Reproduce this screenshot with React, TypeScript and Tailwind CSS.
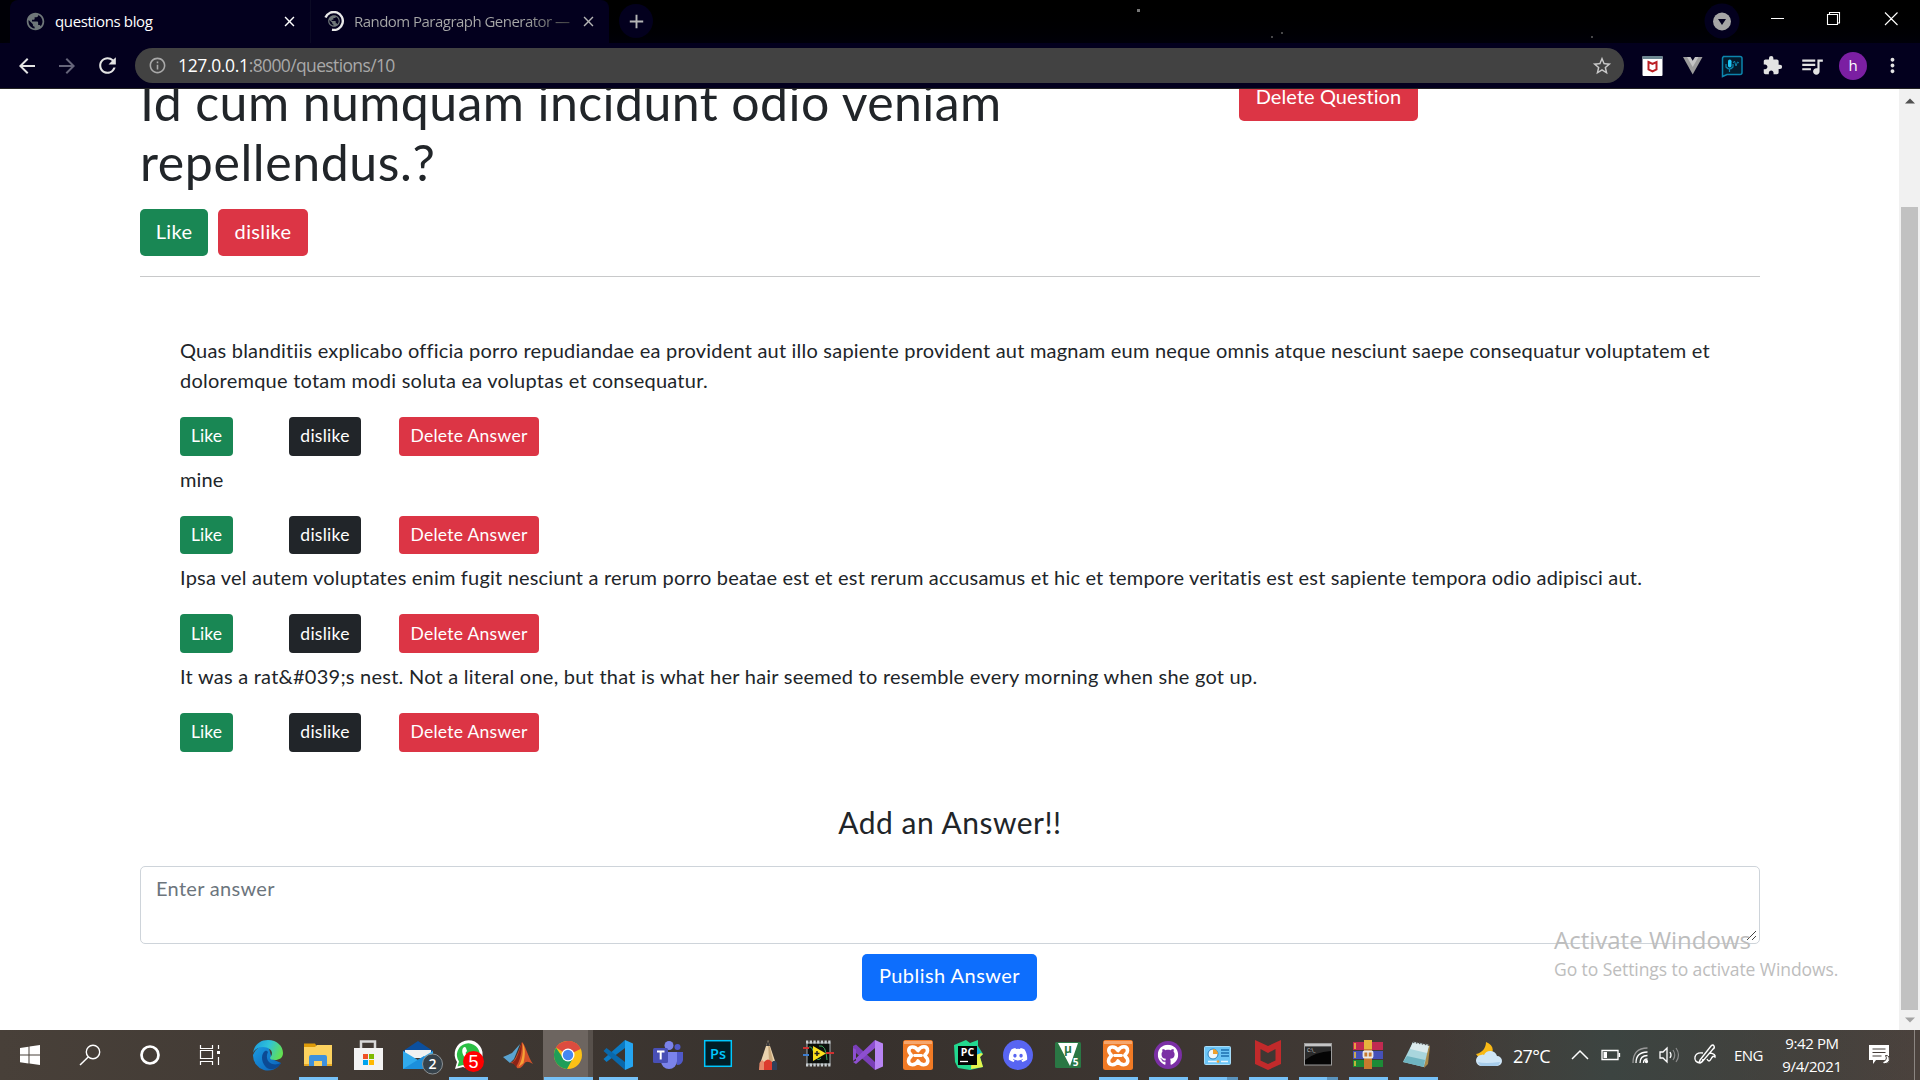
import React from "react";
import { FaDiscord, FaGithub } from "react-icons/fa";
import {
  MdArrowBack,
  MdArrowForward,
  MdRefresh,
  MdInfoOutline,
  MdStarBorder,
  MdExtension,
  MdQueueMusic,
  MdMoreVert,
  MdClose,
  MdAdd,
  MdPublic,
} from "react-icons/md";

/* ---------- browser chrome ---------- */

function TabStrip() {
  return (
    <div className="flex h-[43px] bg-linear-to-b from-black to-[#000009]">
      <div className="flex w-[10px] items-end">
        <div className="h-full w-full rounded-br-lg bg-[#000006]" />
      </div>
      <div className="flex w-[300px] items-center rounded-tl-lg bg-[#03001e] pr-3 pb-px pl-[15px] text-[15px] text-white">
        <MdPublic className="size-[21px] text-[#6f7779]" />
        <span className="ml-[9px] flex-1 tracking-[-0.35px] whitespace-nowrap">questions blog</span>
        <MdClose className="size-[17px]" />
      </div>
      <div className="flex w-[299px] items-center rounded-tr-lg border-l border-[#0b0a24] bg-[#03001e] pr-[12px] pb-px pl-[13px] text-[15px]">
        <span className="relative flex size-5 items-center justify-center">
          <svg viewBox="0 0 20 20" className="absolute inset-0 size-5">
            <path d="M1.5 6.5A9 9 0 1 1 8 18.8" fill="none" stroke="#e8e8e8" strokeWidth="2.4" />
          </svg>
          <MdPublic className="size-[14px] text-[#6f7779]" />
        </span>
        <span className="ml-[10px] flex-1 bg-linear-to-r from-[#a8a8a8] from-75% to-[#333] bg-clip-text tracking-[-0.53px] whitespace-nowrap text-transparent">
          Random Paragraph Generator —
        </span>
        <MdClose className="size-[17px] text-[#b5b5b5]" />
      </div>
      <div className="mt-[4px] ml-[10px] flex size-[34px] items-center justify-center rounded-full bg-[#03001e]">
        <MdAdd className="size-[23px] text-[#b5b5b5]" />
      </div>
      <svg className="ml-auto h-[43px] w-[1052px]" viewBox="868 0 1052 43">
        <g fill="#777">
          <rect x="1137" y="9" width="3" height="3" />
          <rect x="1271" y="36" width="2" height="2" opacity=".6" />
          <rect x="1281" y="32" width="2" height="2" opacity=".6" />
          <rect x="1591" y="36" width="2" height="2" opacity=".6" />
        </g>
        <circle cx="1722" cy="21" r="17.5" fill="#03001e" />
        <circle cx="1722" cy="21.5" r="9" fill="#a5a5a5" />
        <path d="M1718 19h8l-4 6z" fill="#03001e" />
        <path d="M1771 18.5h13M1827.500 14.500h10v10h-10zM1829.500 14v-1.500h10v10.500h-1.500M1885 12.500l12.500 12.500M1897.500 12.500l-12.500 12.500" fill="none" stroke="#fff" strokeWidth="1.100" />
      </svg>
    </div>
  );
}

function Toolbar() {
  return (
    <div className="flex h-[46px] items-center border-b border-[#242424] bg-[#03001e] text-[#e3e3e3]">
      <MdArrowBack className="ml-[15px] size-[24px]" />
      <MdArrowForward className="ml-[16px] size-[24px] text-[#66657a]" />
      <MdRefresh className="ml-[16px] size-[25px]" />
      <div className="ml-[15px] flex h-[35px] w-[1489px] items-center rounded-full bg-[#424242] pr-[11px] pl-[13px] text-[17.5px] text-[#a9a9a9]">
        <MdInfoOutline className="size-[19px]" />
        <span className="ml-[11px] flex-1 tracking-[-0.63px]">
          <span className="tracking-[-0.35px] text-white">127.0.0.1</span>:8000/questions/10
        </span>
        <MdStarBorder className="size-[22px] text-[#c9c9c9]" />
      </div>
      <svg className="ml-[17px] h-[30px] w-[110px]" viewBox="0 0 110 30">
        <rect x="1.500" y="5" width="20" height="20" rx="1" fill="#fff" />
        <rect x="1.500" y="5" width="20" height="3" fill="#6d8792" />
        <path d="M7.500 11l4 2 4-2v7.500l-4 2-4-2z" fill="none" stroke="#bb1f24" strokeWidth="2" />
        <path d="M42 6h19.500L51.700 23.500z" fill="#9b9b9b" />
        <path d="M46 6h4l1.700 3.500L53.500 6h4l-5.800 10z" fill="#c4c4c4" />
        <path d="M49.500 6h4.500l-2.300 3.800z" fill="#03001e" />
        <path d="M82 5.500h17q2 0 2 2v14q0 2-2 2H86l-4.500 2V7.500q0-2 2-2z" fill="#031a2c" stroke="#0c85ad" strokeWidth="1.500" />
        <path d="M85 13v3q3.500 4 7 0v-3M88.500 18v3" fill="none" stroke="#0c85ad" strokeWidth="1.200" />
        <rect x="87" y="8.500" width="3.500" height="8" rx="1.700" fill="#1fc6f5" />
        <path d="M92 12l1.500-2 1.500 5 1.500-4 1.500 1" fill="none" stroke="#0c85ad" />
      </svg>
      <MdExtension className="ml-[11px] size-[21px]" />
      <MdQueueMusic className="ml-[16px] size-[26px]" />
      <div className="ml-[14px] flex size-[28px] items-center justify-center rounded-full bg-[#7b1fa2] text-[15px] text-white">h</div>
      <MdMoreVert className="ml-[14px] size-[23px]" />
    </div>
  );
}

/* ---------- page ---------- */

type Line = { text: string; cls: string };
const answers: { lines: Line[] }[] = [
  {
    lines: [
      { text: "Quas blanditiis explicabo officia porro repudiandae ea provident aut illo sapiente provident aut magnam eum neque omnis atque nesciunt saepe consequatur voluptatem et", cls: "tracking-[0.21px]" },
      { text: "doloremque totam modi soluta ea voluptas et consequatur.", cls: "tracking-[0.24px]" },
    ],
  },
  { lines: [{ text: "mine", cls: "tracking-[0.1px]" }] },
  { lines: [{ text: "Ipsa vel autem voluptates enim fugit nesciunt a rerum porro beatae est et est rerum accusamus et hic et tempore veritatis est est sapiente tempora odio adipisci aut.", cls: "tracking-[0.187px]" }] },
  { lines: [{ text: "It was a rat&#039;s nest. Not a literal one, but that is what her hair seemed to resemble every morning when she got up.", cls: "tracking-[0.24px]" }] },
];

const smallButton = "flex h-[38.75px] items-center justify-center rounded-[4px] text-[17.5px] text-white whitespace-nowrap";
const button = "flex h-[47px] items-center justify-center rounded-[5px] pb-[4px] text-[20px] text-white whitespace-nowrap";

function Answer({ lines }: { lines: Line[] }) {
  return (
    <div>
      <div className="pb-[22px] text-[20px] leading-[30px]">
        {lines.map((l) => (
          <p key={l.text} className={"whitespace-nowrap " + l.cls}>
            {l.text}
          </p>
        ))}
      </div>
      <div className="mb-[8px] flex">
        <button className={smallButton + " w-[53px] bg-[#198754]"}>Like</button>
        <button className={smallButton + " ml-[56px] w-[72px] bg-[#212529] tracking-[0.25px]"}>dislike</button>
        <button className={smallButton + " ml-[38px] w-[140px] bg-[#dc3545] tracking-[0.28px]"}>Delete Answer</button>
      </div>
    </div>
  );
}

function Page() {
  return (
    <div className="relative flex h-[941px] overflow-hidden bg-white font-['Lato',sans-serif] text-[#212529]">
      <main className="h-full w-[1899px] px-[140px]">
        <div className="-mt-[17px] flex h-[120px]">
          <h1 className="w-[1099px] text-[50px] leading-[60px] tracking-[0.42px] whitespace-nowrap">
            Id cum numquam incidunt odio veniam
            <br />
            <span className="tracking-[0.6px]">repellendus.?</span>
          </h1>
          <button className={button + " mt-[2px] w-[179px] bg-[#dc3545] tracking-[0.08px]"}>Delete Question</button>
        </div>
        <div className="mt-[17px] flex gap-[10px]">
          <button className={button + " w-[68px] bg-[#198754] tracking-[0.35px]"}>Like</button>
          <button className={button + " w-[90px] bg-[#dc3545] tracking-[0.35px]"}>dislike</button>
        </div>
        <div className="mt-[20px] h-px w-[1620px] bg-[#c8c9ca]" />
        <section className="mt-[57.75px] pl-[40px]">
          {answers.map((a) => (
            <Answer key={a.lines[0].text} lines={a.lines} />
          ))}
        </section>
        <h2 className="mt-[52px] w-[1620px] text-center text-[30px] leading-[36px] tracking-[0.5px]">Add an Answer!!</h2>
        <div className="relative mt-[26px] h-[78px] w-[1620px] rounded-[5px] border border-[#ced4da] px-[15px] pt-[6px] text-[20px] leading-[30px] tracking-[0.3px] text-[#6c757d]">
          Enter answer
          <svg className="absolute right-[2px] bottom-[2px] size-[11px]" viewBox="0 0 11 11">
            <path d="M1 10L10 1M6 10l4-4" stroke="#444" fill="none" />
          </svg>
        </div>
        <div className="mt-[10px] flex w-[1619px] justify-center">
          <button className={button + " w-[175px] bg-[#0d6efd] tracking-[0.46px]"}>Publish Answer</button>
        </div>
      </main>
      <div className="flex h-full w-[21px] flex-col items-center bg-[#f1f1f1]">
        <svg className="mt-[9px] h-[6px] w-[10px]" viewBox="0 0 10 6">
          <path d="M0 5.500L5 .5l5 5z" fill="#505050" />
        </svg>
        <div className="mt-[103px] h-[803px] w-[17px] bg-[#c1c1c1]" />
        <svg className="mt-[7px] h-[6px] w-[10px]" viewBox="0 0 10 6">
          <path d="M0 .5l5 5 5-5z" fill="#a3a3a3" />
        </svg>
      </div>
      <div className="absolute top-[834px] left-[1554px] font-['Open_Sans',sans-serif] whitespace-nowrap text-[#bdbdbd]">
        <div className="text-[24px] leading-[34px]">Activate Windows</div>
        <div className="text-[17.5px] leading-[24px] tracking-[-0.07px]">Go to Settings to activate Windows.</div>
      </div>
    </div>
  );
}

/* ---------- taskbar icons, each drawn on a 32x32 grid ---------- */

function Icon({ children }: { children: React.ReactNode }) {
  return (
    <svg viewBox="0 0 32 32" className="size-[32px] overflow-visible">
      {children}
    </svg>
  );
}

const Edge = () => (
  <Icon>
    <defs>
      <linearGradient id="edgeTop" x1="0" x2="1" y1=".2" y2=".5">
        <stop offset="0" stopColor="#1a9be0" />
        <stop offset=".5" stopColor="#30c3d8" />
        <stop offset="1" stopColor="#63e052" />
      </linearGradient>
      <linearGradient id="edgeLow" x1="0" x2="1" y1="0" y2="1">
        <stop offset="0" stopColor="#1b9de2" />
        <stop offset="1" stopColor="#0b5fb8" />
      </linearGradient>
    </defs>
    <path d="M1 16A15 15 0 0 1 16 6l4 14 9 4A15 15 0 0 1 1 16z" fill="url(#edgeLow)" />
    <path d="M1 14C2 6 8 1 16 1c9 0 15 6 15 13 0 5-4 7-8 7-3 0-5-1-5-2s2-2 2-5c0-3-4-6-9-6C6 8 2 11 1 14z" fill="url(#edgeTop)" />
    <path d="M13 12c-4 3-4 10 0 15 3 4 8 4 12 1.500 2-1.200 3-3 4-4.500-6 3-13 1-14-5-.3-2 0-4 1-6-1-1.500-2-1.500-3-1z" fill="#0c4a94" />
  </Icon>
);
const Explorer = () => (
  <Icon>
    <path d="M2 4.500h11l2 3h14V14H2z" fill="#dd9a08" />
    <path d="M2 8h11l2-2h15v21H2z" fill="#fcd25f" />
    <path d="M7 27V18q0-2 2-2h14q2 0 2 2v9h-5v-5h-8v5z" fill="#3e91dd" />
    <path d="M2 25h5v2H2zM25 25h5v2h-5z" fill="#e6a823" />
  </Icon>
);
const Store = () => (
  <Icon>
    <path d="M9 10V2.500h14V10" fill="none" stroke="#d9d9d9" strokeWidth="2.500" />
    <path d="M2 9h29v22H2z" fill="#f3f3f3" />
    <path d="M11 15h5v5h-5z" fill="#f05125" />
    <path d="M17 15h5v5h-5z" fill="#7fba00" />
    <path d="M11 21h5v5h-5z" fill="#00a4ef" />
    <path d="M17 21h5v5h-5z" fill="#ffb900" />
  </Icon>
);
const Mail = () => (
  <Icon>
    <path d="M1 12L16 2l15 10v4H1z" fill="#0b4f9e" />
    <path d="M3 11h26v8H3z" fill="#f1f1f1" />
    <path d="M1 12l15 9 15-9v18H1z" fill="#31aaec" />
    <path d="M1 30L22 17l9 13z" fill="#1c8fdb" />
    <circle cx="30.500" cy="25" r="10" fill="#36424b" stroke="#8c9296" />
    <text x="30.500" y="30" textAnchor="middle" fontSize="14" fontWeight="600" fill="#fff">2</text>
  </Icon>
);
const WhatsApp = () => (
  <Icon>
    <path d="M3 30l2-7A14 14 0 1 1 11 28z" fill="#fff" />
    <path d="M5.500 27.500l1.500-5A11.500 11.500 0 1 1 11 26z" fill="#2bbf45" />
    <path d="M11 9q2-2 3 0l1 3-1.500 2q1.500 3 4.500 4.500l2-2 4 2q0 3-3 4-5 0-9-5-3-5-1-8.500z" fill="#fff" />
    <circle cx="21.500" cy="22.500" r="10.500" fill="#f00" />
    <text x="21.500" y="28.500" textAnchor="middle" fontSize="18" fontFamily="Liberation Sans" fill="#fff">5</text>
  </Icon>
);
const Matlab = () => (
  <Icon>
    <path d="M1 18l9-4 8-9-6 15-4 4z" fill="#5aa3d0" />
    <path d="M8 24c5-1 7-8 12-21 3 2 6 15 11 22-5-3-7-3-9 0-2 3-4 5-7 4-1-4-4-5-7-5z" fill="#d4512a" />
    <path d="M20 3c0 10-2 19-6 25-1-2-2-3-4-4 6-4 7-13 10-21z" fill="#8b2317" />
    <path d="M20.500 4c3 5 3 11 1 20l-5 4c4-7 5-15 4-24z" fill="#f6a336" />
  </Icon>
);
const Chrome = () => (
  <Icon>
    <circle cx="16" cy="16" r="14" fill="#fbc116" />
    <path d="M16 16L4 8.500A14 14 0 0 1 28.500 10z" fill="#dd4c3f" />
    <path d="M16 2a14 14 0 0 1 12.500 8H16z" fill="#dd4c3f" />
    <path d="M4 8.700A14 14 0 0 0 15 30l6-11-10 0z" fill="#1f9e58" />
    <circle cx="16" cy="16" r="6.500" fill="#fff" />
    <circle cx="16" cy="16" r="5.200" fill="#4587f0" />
  </Icon>
);
const VSCode = () => (
  <Icon>
    <path d="M23 1L1.500 20l3 3L23 9z" fill="#0a7ac4" />
    <path d="M23 31L1.500 12l3-3L23 23z" fill="#0968ab" />
    <path d="M23 1l8 3.500v23L23 31z" fill="#25a5f1" />
  </Icon>
);
const Teams = () => (
  <Icon>
    <circle cx="25.500" cy="8" r="3" fill="#5059c9" />
    <path d="M22 13h9v8q-1 5-6 5z" fill="#5059c9" />
    <circle cx="17" cy="6.500" r="4.500" fill="#7b83eb" />
    <path d="M9 13h16v9a8 8 0 0 1-16 0z" fill="#7b83eb" />
    <rect x="1" y="9" width="15" height="15" rx="1.500" fill="#484fb5" />
    <path d="M5 12.500h7.500M8.700 12.500v8" stroke="#fff" strokeWidth="2" />
  </Icon>
);
const Photoshop = () => (
  <Icon>
    <rect x="2.700" y="1.700" width="26.600" height="25.600" fill="#001d26" stroke="#00c8ff" strokeWidth="1.500" />
    <text x="16" y="20" textAnchor="middle" fontSize="14.500" fontWeight="600" fill="#00c8ff">Ps</text>
  </Icon>
);
const Pencil = () => (
  <Icon>
    <path d="M16 1l8 24H8z" fill="#ead3ae" />
    <path d="M16 1l5 20-1 2h-3z" fill="#c9a97c" />
    <path d="M16 1l2 6h-4z" fill="#3c3a3c" />
    <path d="M7.500 24q3-5 4.500-1v8H7z" fill="#e8896a" />
    <path d="M12 23q4-5 8 0v8h-8z" fill="#dd3a2d" />
    <path d="M20 23q3-3 5 1v7h-5z" fill="#30405a" />
  </Icon>
);
const LabView = () => (
  <Icon>
    <rect x="5" y="4" width="23" height="21" fill="#0c0f0c" stroke="#a9b0b4" strokeWidth="1" />
    <path d="M4 3h25M4 26h25" stroke="#c9cfd2" strokeWidth="3" strokeDasharray="2.300 1.400" />
    <path d="M5 10q4-6 7 4t7 5M17 7q7-2 8 14" fill="none" stroke="#3aa55c" />
    <path d="M1 9h6M24 14h8" stroke="#d03030" strokeWidth="2" />
    <path d="M1 16h6" stroke="#3c7dd0" strokeWidth="2" />
    <path d="M11 7l13 7.500-13 7.500z" fill="#fbdf1c" />
    <path d="M12.500 14.500h5M15 12v5" stroke="#222" strokeWidth="1.500" />
  </Icon>
);
const VisualStudio = () => (
  <Icon>
    <path d="M1 7l3-1.500L23 23v8L4 14v6l-3 1z" fill="#7a3fb8" />
    <path d="M1 22V9l3 1.500v11L1 23l3 2L23 9V1L1 22z" fill="#8d4fd0" />
    <path d="M23 1l8 3.500v23L23 31z" fill="#b884f3" />
  </Icon>
);
const Xampp = () => (
  <Icon>
    <rect x="1" y="1" width="30" height="30" rx="2.500" fill="#f07a25" />
    <path d="M2 2h28v3H2z" fill="#f6a66c" />
    <path d="M16 11.500C13 6.500 6.500 7 6.800 12c.2 2.500 2.200 3 2.700 4.500-.5 1.500-3 2-3 5.500.3 5 7 5 9.500 0 2.500 5 9.500 5 9.800 0 0-3.500-2.500-4-3-5.500.5-1.500 2.700-2 2.700-5C25.500 6.500 19 6.500 16 11.500z" fill="none" stroke="#fff" strokeWidth="3.600" strokeLinejoin="round" />
    <path d="M12.500 16.500h7" stroke="#fff" strokeWidth="2.800" strokeLinecap="round" />
  </Icon>
);
const PyCharm = () => (
  <Icon>
    <path d="M2 6l12-5 4 3 8-3v6l5 8-3 3 3 10-13 3-12-2-3-6z" fill="#22d88f" />
    <path d="M20 10l11 5-3 3 3 10-12 2z" fill="#e6f34c" />
    <path d="M24 6l5 8-5 2z" fill="#14aee0" />
    <rect x="6" y="7" width="19" height="19" fill="#050505" />
    <text x="15.500" y="17" textAnchor="middle" fontSize="10.500" fontWeight="700" fill="#fff">PC</text>
    <path d="M8 22.500h8" stroke="#fff" strokeWidth="1.300" />
  </Icon>
);
const Discord = () => (
  <Icon>
    <circle cx="16" cy="16" r="15" fill="#5865f2" />
    <FaDiscord x="6" y="6" size={20} color="#fff" />
  </Icon>
);
const Uvision = () => (
  <Icon>
    <rect x="3" y="3" width="26" height="26" rx="1.500" fill="#2a7744" />
    <path d="M6 4h20l-8 23z" fill="#fff" />
    <text x="16" y="14" textAnchor="middle" fontSize="12" fontWeight="700" fill="#2a7744">µ</text>
    <text x="23.500" y="27" textAnchor="middle" fontSize="10" fontWeight="700" fill="#fff">5</text>
  </Icon>
);
const Github = () => (
  <Icon>
    <circle cx="16" cy="16" r="14" fill="#7b2fa5" />
    <FaGithub x="5.500" y="5.500" size={21} color="#fff" />
  </Icon>
);
const ControlPanel = () => (
  <Icon>
    <rect x="2.500" y="7.500" width="26" height="18" rx="1" fill="#6cc5f6" stroke="#a7dcf8" />
    <circle cx="11" cy="15" r="5" fill="#f1f6f9" stroke="#2d81bd" />
    <path d="M11 15V10a5 5 0 0 1 5 5z" fill="#f0a02e" />
    <path d="M19 11h8M19 14h8M19 17h8" stroke="#1c6fb0" strokeWidth="1.600" />
    <path d="M6 22.500h10M19 22.500h7" stroke="#eaf6fd" strokeWidth="1.500" />
    <circle cx="16" cy="22.500" r="1.300" fill="#f0a02e" />
  </Icon>
);
const McAfee = () => (
  <Icon>
    <path d="M3 1l13 6 13-6v24l-13 6-13-6zM8.500 10v11.500l7.500 3.500 7.500-3.500V10L16 14z" fillRule="evenodd" fill="#c22a2b" />
  </Icon>
);
const Terminal = () => (
  <Icon>
    <rect x="2.500" y="4.500" width="27" height="21.500" fill="#050505" stroke="#9b9b9b" />
    <path d="M3 5h26v2.500H3z" fill="#c5c5c5" />
    <path d="M3 8h26v4q-16 1-26 9z" fill="#2a2a2a" />
    <text x="5" y="13" fontSize="5" fill="#ddd">C:\_</text>
  </Icon>
);
const WinRar = () => (
  <Icon>
    <rect x="1" y="3" width="30" height="8" fill="#c02a51" />
    <rect x="1" y="12" width="30" height="8" fill="#4651b8" />
    <rect x="1" y="21" width="30" height="7" fill="#1d8b37" />
    <path d="M3 4v6M3 13v6M3 22v5" stroke="#f1c63b" strokeWidth="1.500" />
    <rect x="12" y="1" width="8" height="29" fill="#c87a2d" />
    <path d="M12 1h8v9h-8z" fill="#e5b43c" />
    <rect x="11.500" y="12.500" width="9" height="6" rx="1" fill="none" stroke="#e8e8e8" strokeWidth="1.800" />
    <path d="M16 13v6" stroke="#e8e8e8" strokeWidth="1.500" />
  </Icon>
);
const Notepad = () => (
  <Icon>
    <path d="M25 5l3 2-2 18-4 4z" fill="#a98a4a" />
    <path d="M11 3l16 3-5 22L1 23z" fill="#a9d6dd" />
    <path d="M11 3l16 3-2 8-17-4z" fill="#dcebed" />
    <path d="M5 17l18 4-1.500 7L1 23z" fill="#6fb4c0" />
    <path d="M11 3l16 3" stroke="#555" strokeWidth="1.800" strokeDasharray="1.500 1.500" />
  </Icon>
);

type TaskApp = { key: string; icon: () => React.ReactElement; state?: "running" | "active" | "multi" };
const apps: TaskApp[] = [
  { key: "edge", icon: Edge },
  { key: "explorer", icon: Explorer, state: "running" },
  { key: "store", icon: Store },
  { key: "mail", icon: Mail },
  { key: "whatsapp", icon: WhatsApp, state: "running" },
  { key: "matlab", icon: Matlab },
  { key: "chrome", icon: Chrome, state: "active" },
  { key: "vscode", icon: VSCode, state: "running" },
  { key: "teams", icon: Teams },
  { key: "photoshop", icon: Photoshop },
  { key: "pencil", icon: Pencil },
  { key: "labview", icon: LabView },
  { key: "vs", icon: VisualStudio },
  { key: "xampp", icon: Xampp },
  { key: "pycharm", icon: PyCharm },
  { key: "discord", icon: Discord },
  { key: "uvision", icon: Uvision },
  { key: "xampp-panel", icon: Xampp, state: "running" },
  { key: "github", icon: Github, state: "running" },
  { key: "control", icon: ControlPanel, state: "multi" },
  { key: "mcafee", icon: McAfee, state: "running" },
  { key: "terminal", icon: Terminal, state: "multi" },
  { key: "winrar", icon: WinRar, state: "running" },
  { key: "notepad", icon: Notepad, state: "running" },
];

function TaskItem({ icon: Glyph, state }: Omit<TaskApp, "key">) {
  const active = state === "active";
  return (
    <div className={"flex h-[50px] w-[50px] flex-col items-center " + (active ? "bg-linear-to-r from-[#6d6560] from-90% to-[#57504b] to-90%" : "")}>
      <div className="mt-[9px] h-[38px]">
        <Glyph />
      </div>
      {state && (
        <div className={"flex h-[3px] bg-[#76c1f7] " + (active ? "w-[49px]" : "w-[39px]")}>
          {state === "multi" && <div className="ml-auto h-full w-[11px] bg-[#5a93bd]" />}
        </div>
      )}
    </div>
  );
}

function Taskbar() {
  return (
    <div className="flex h-[50px] items-center bg-linear-to-r from-[#484039] via-[#37312d] via-45% to-[#4b423d] font-['Open_Sans',sans-serif] text-white">
      <svg className="h-[50px] w-[243px]" viewBox="0 0 243 50">
        <path d="M20 18l8.500-1.200V24.500H20zM29.500 16.600L40 15v9.500H29.500zM20 25.500h8.500v8L20 32.300zM29.500 25.500H40V35l-10.500-1.500z" fill="#fff" />
        <g fill="none" stroke="#fff">
          <circle cx="93" cy="22" r="6.700" strokeWidth="1.400" />
          <path d="M88.500 26.800L80 35" strokeWidth="1.500" />
          <circle cx="150" cy="25" r="8.500" strokeWidth="2.700" />
          <path d="M200.500 15v3.500h12V15M200.500 35v-3.500h12V35M200.500 20.500h12v8h-12zM218.500 15v4M218.500 27v8" strokeWidth="1.200" />
        </g>
        <rect x="217" y="21" width="3" height="3" fill="#fff" />
      </svg>
      {apps.map((a) => (
        <TaskItem key={a.key} icon={a.icon} state={a.state} />
      ))}
      <div className="flex h-full flex-1 items-center bg-linear-to-r from-transparent via-[#3c4441] via-35% to-transparent">
        <svg className="ml-[30px] h-[34px] w-[32px]" viewBox="0 0 32 34">
          <path d="M13 4c0 6-4 11-10 12 2 4 8 6 13 3s6-12-3-15z" fill="#f9b915" />
          <path d="M9 28a5.500 5.500 0 0 1-1-11q2-1 3 0a7 7 0 0 1 13 1 5 5 0 0 1 0 10z" fill="#cfe6f7" />
          <path d="M8 28a5 5 0 0 1-3-4q6 2 22 0a5 5 0 0 1-4 4z" fill="#a8cdeb" />
        </svg>
        <span className="ml-[8px] w-[53px] pt-[2px] text-[18px] tracking-[-0.7px]">27°C</span>
        <svg className="h-[30px] w-[156px]" viewBox="0 0 156 30" fill="none" stroke="#fff">
          <path d="M6 19l8-8 8 8" strokeWidth="1.500" />
          <path d="M36 10.500h16v9H36zM53.500 13v4" strokeWidth="1.300" />
          <rect x="37.500" y="12" width="3.500" height="6" fill="#fff" stroke="none" />
          <g strokeWidth="1.300">
            <path d="M67 23Q67 8 81.500 8" stroke="#999" />
            <path d="M70 23q0-11 11.500-11M74 23q0-7.500 7.500-7.500M77.500 23q0-4 4-4" />
            <circle cx="80.500" cy="21.500" r="1" fill="#fff" />
          </g>
          <path d="M94 12h3l4-4v14l-4-4h-3zM104 12q2 3 0 6" strokeWidth="1.300" />
          <path d="M107 10q3.500 5 0 10M110 8q5 7 0 14" stroke="#8b8b8b" strokeWidth="1.200" />
          <path d="M134 20l11-14q2-2 3 0t-1 3l-11 13-3 1zM137 13q-7-1-8 4t5 6q3-1 3-4M141 19q2 4 4 0t4-2q1-3-5-4" strokeWidth="1.400" />
        </svg>
        <span className="w-[52px] pt-px pl-[12px] text-[15px] tracking-[-0.600px]">ENG</span>
        <div className="w-[76px] text-center text-[15px] leading-[23px] tracking-[-0.400px] whitespace-nowrap">
          <div>9:42 PM</div>
          <div>9/4/2021</div>
        </div>
        <svg className="ml-[18px] h-[22px] w-[22px]" viewBox="0 0 22 22">
          <path d="M1 1h20v15H8l-3 4v-4H1z" fill="#fff" />
          <path d="M4.500 5h13M4.500 8.500h13M4.500 12h9" stroke="#453e3a" strokeWidth="1.200" />
          <path d="M17.500 11.500q3 5-4 6.500 3 3 6 1t1.500-6q-1.500-2-3.500-1.500z" fill="#fff" stroke="#453e3a" />
        </svg>
        <div className="mr-[5px] ml-auto h-full w-px bg-[#8b8581]" />
      </div>
    </div>
  );
}

export default function App() {
  return (
    <div className="h-[1080px] w-[1920px] overflow-hidden bg-white font-['Open_Sans',sans-serif]">
      <TabStrip />
      <Toolbar />
      <Page />
      <Taskbar />
    </div>
  );
}
